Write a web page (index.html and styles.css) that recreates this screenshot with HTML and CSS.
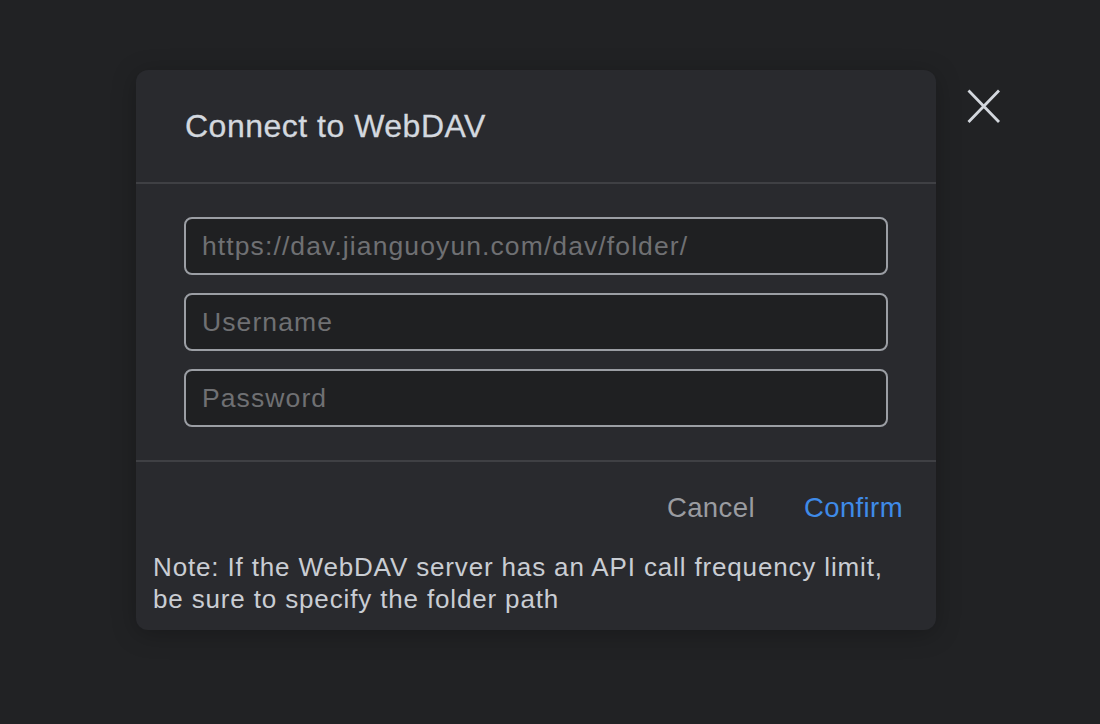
FILE: index.html
```html
<!DOCTYPE html>
<html lang="en">
<head>
<meta charset="utf-8">
<title>Connect to WebDAV</title>
<link rel="stylesheet" href="styles.css">
</head>
<body>
<div class="stage">
  <div class="dialog">
    <div class="dialog-header">
      <h1 class="dialog-title">Connect to WebDAV</h1>
    </div>
    <div class="dialog-body">
      <input class="field" type="text" placeholder="https://dav.jianguoyun.com/dav/folder/">
      <input class="field" type="text" placeholder="Username">
      <input class="field" type="password" placeholder="Password">
    </div>
    <div class="dialog-footer">
      <div class="actions">
        <button class="btn btn-cancel" type="button">Cancel</button>
        <button class="btn btn-confirm" type="button">Confirm</button>
      </div>
      <p class="note">Note: If the WebDAV server has an API call frequency limit, be sure to specify the folder path</p>
    </div>
  </div>
  <button class="close" type="button" aria-label="Close">
    <svg width="34" height="34" viewBox="0 0 34 34"><path d="M1.5 1.5 L32 33 M32 1.5 L1.5 33" stroke="#d3d7dd" stroke-width="2.8" fill="none"/></svg>
  </button>
</div>
</body>
</html>
```

FILE: styles.css
```css
* { box-sizing: border-box; }
html, body {
  margin: 0;
  padding: 0;
  background: #212224;
  width: 1100px;
  height: 724px;
  overflow: hidden;
  font-family: "Liberation Sans", Arial, Helvetica, sans-serif;
}
.stage {
  display: flex;
  align-items: flex-start;
  padding: 70px 0 0 136px;
  gap: 31px;
}
.dialog {
  width: 800px;
  background: #292a2e;
  border-radius: 12px;
  box-shadow: 0 4px 24px rgba(0,0,0,0.25);
  overflow: hidden;
}
.dialog-header {
  height: 114px;
  display: flex;
  align-items: center;
  padding: 0 48px 0 49px;
  border-bottom: 2px solid #3f4044;
}
.dialog-title {
  margin: 0;
  font-size: 32px;
  font-weight: normal;
  letter-spacing: 0.5px;
  color: #d3d8df;
  line-height: 40px;
  -webkit-text-stroke: 0.3px #d3d8df;
}
.dialog-body {
  display: flex;
  flex-direction: column;
  gap: 18px;
  padding: 33px 48px 33px 48px;
  border-bottom: 2px solid #3f4044;
}
.field {
  height: 58px;
  width: 704px;
  background: #1f2022;
  border: 2px solid #9b9ea4;
  border-radius: 8px;
  padding: 0 16px;
  font-family: inherit;
  font-size: 26.5px;
  letter-spacing: 1.1px;
  color: #d3d8df;
  outline: none;
}
.field::placeholder { color: #6f7073; }
.dialog-footer {
  padding: 29px 33px 15px 17px;
}
.actions {
  display: flex;
  justify-content: flex-end;
  gap: 49px;
}
.btn {
  background: none;
  border: 0;
  padding: 0;
  font-family: inherit;
  font-size: 27.5px;
  letter-spacing: 0.4px;
  line-height: 34px;
  cursor: pointer;
}
.btn-cancel { color: #9a9ca1; }
.btn-confirm { color: #3f8be8; }
.note {
  margin: 26px 0 0 0;
  width: 750px;
  font-size: 26px;
  letter-spacing: 0.85px;
  line-height: 32px;
  color: #c9cdd3;
}
.close {
  margin-top: 19px;
  background: none;
  border: 0;
  padding: 0;
  width: 34px;
  height: 34px;
  cursor: pointer;
}
.close svg { display: block; }
```
